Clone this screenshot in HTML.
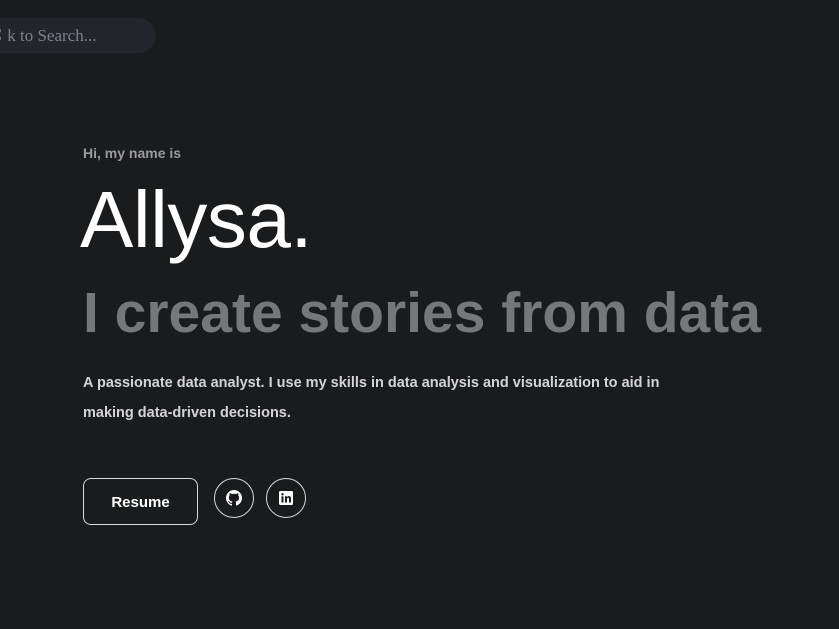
<!DOCTYPE html>
<html><head><style>
html,body{margin:0;padding:0;background:#1a1b1d;width:839px;height:629px;overflow:hidden;font-family:"Liberation Sans",sans-serif;}
.s{position:absolute;left:-30px;top:18px;width:186px;height:35px;border-radius:18px;background:#23252a;color:#7d828a;font-family:"Liberation Serif",serif;font-size:17px;line-height:35px;}
.s span{position:absolute;left:16px;}
.hi{position:absolute;left:83px;top:145px;color:#9a9a9e;font-size:14px;font-weight:bold;}
.n{position:absolute;left:80px;top:172px;color:#fff;font-size:80px;letter-spacing:-0.5px;line-height:95px;}
.t{position:absolute;left:83px;top:278px;color:#76777a;font-size:57px;line-height:70px;font-weight:bold;letter-spacing:0px;white-space:nowrap;}
.p{position:absolute;left:83px;top:368px;width:610px;color:#d4d4d6;font-size:14.5px;font-weight:bold;line-height:30px;}
.b{position:absolute;left:83px;top:478px;width:115px;height:47px;border:1.5px solid #d8d8d8;border-radius:8px;color:#fff;font-size:15px;font-weight:bold;text-align:center;line-height:47px;box-sizing:border-box;}
.c{position:absolute;top:478px;width:40px;height:40px;border:1.5px solid #d8d8d8;border-radius:50%;box-sizing:border-box;display:flex;align-items:center;justify-content:center;}
</style></head><body>
<div class="s"><span>⌘ k to Search...</span></div>
<div class="hi">Hi, my name is</div>
<div class="n">Allysa.</div>
<div class="t">I create stories from data</div>
<div class="p">A passionate data analyst. I use my skills in data analysis and visualization to aid in making data-driven decisions.</div>
<div class="b">Resume</div>
<div class="c" style="left:214px"><svg width="16" height="16" viewBox="0 0 16 16"><path fill="#fff" d="M8 0C3.6 0 0 3.6 0 8c0 3.5 2.3 6.5 5.5 7.6.4.1.5-.2.5-.4v-1.4c-2.200.5-2.7-1-2.7-1-.4-.9-.9-1.200-.9-1.200-.7-.5.1-.5.1-.5.8.1 1.200.8 1.200.8.7 1.300 1.900.9 2.300.7.1-.5.3-.9.5-1.100-1.800-.2-3.600-.9-3.600-4 0-.9.3-1.600.8-2.100-.1-.2-.4-1 .1-2.100 0 0 .7-.2 2.200.8.6-.2 1.300-.3 2-.3s1.400.1 2 .3c1.500-1 2.200-.8 2.200-.8.4 1.100.2 1.900.1 2.100.5.6.8 1.300.8 2.100 0 3.100-1.900 3.700-3.600 3.900.3.3.5.8.5 1.500v2.200c0 .2.1.5.6.4C13.700 14.500 16 11.500 16 8c0-4.400-3.600-8-8-8z"/></svg></div>
<div class="c" style="left:266px"><svg width="14" height="14" viewBox="0 0 14 14"><rect width="14" height="14" rx="1.5" fill="#fff"/><rect x="2.5" y="5.3" width="2" height="6.2" fill="#1a1b1d"/><circle cx="3.5" cy="3.3" r="1.2" fill="#1a1b1d"/><path d="M6 5.3h1.9v.9c.3-.6 1-1.1 2-1.1 1.6 0 2.1 1 2.1 2.5v3.9h-2V8c0-.8-.2-1.3-.9-1.3S8 7.2 8 8v3.5H6z" fill="#1a1b1d"/></svg></div>
</body></html>
